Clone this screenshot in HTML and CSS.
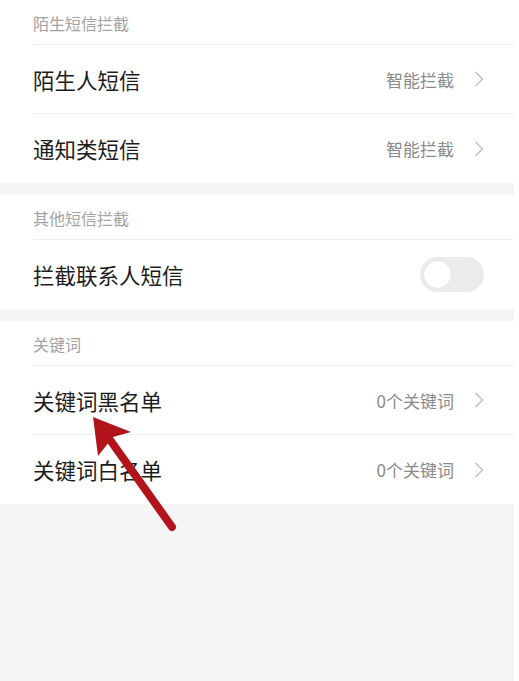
FILE: index.html
```html
<!DOCTYPE html>
<html lang="zh-CN">
<head>
<meta charset="utf-8">
<link rel="stylesheet" href="styles.css">
</head>
<body>
<div class="page">
  <section class="group">
    <div class="group-title">陌生短信拦截</div>
    <div class="row">
      <span class="label">陌生人短信</span>
      <span class="value">智能拦截</span>
      <svg class="chev" viewBox="0 0 10 16"><path d="M1.5 1 L8.5 8 L1.5 15" fill="none" stroke="#bdbdbd" stroke-width="1.3"/></svg>
    </div>
    <div class="row">
      <span class="label">通知类短信</span>
      <span class="value">智能拦截</span>
      <svg class="chev" viewBox="0 0 10 16"><path d="M1.5 1 L8.5 8 L1.5 15" fill="none" stroke="#bdbdbd" stroke-width="1.3"/></svg>
    </div>
  </section>
  <section class="group">
    <div class="group-title">其他短信拦截</div>
    <div class="row">
      <span class="label">拦截联系人短信</span>
      <span class="toggle"><span class="knob"></span></span>
    </div>
  </section>
  <section class="group">
    <div class="group-title">关键词</div>
    <div class="row">
      <span class="label">关键词黑名单</span>
      <span class="value">0个关键词</span>
      <svg class="chev" viewBox="0 0 10 16"><path d="M1.5 1 L8.5 8 L1.5 15" fill="none" stroke="#bdbdbd" stroke-width="1.3"/></svg>
    </div>
    <div class="row">
      <span class="label">关键词白名单</span>
      <span class="value">0个关键词</span>
      <svg class="chev" viewBox="0 0 10 16"><path d="M1.5 1 L8.5 8 L1.5 15" fill="none" stroke="#bdbdbd" stroke-width="1.3"/></svg>
    </div>
  </section>
  <div class="rest"></div>
  <svg class="pointer" viewBox="0 0 519 681" width="519" height="681">
    <line x1="172" y1="527" x2="108" y2="437" stroke="#b3141c" stroke-width="8" stroke-linecap="round"/>
    <polygon points="93,417 131,432 113,437 98,456" fill="#b3141c"/>
  </svg>
</div>
</body>
</html>
```

FILE: styles.css
```css
html, body {
  margin: 0;
  padding: 0;
  background: #ffffff;
}
body {
  font-family: "Noto Sans CJK SC", "Noto Sans", sans-serif;
  width: 519px;
  height: 681px;
  overflow: hidden;
}
.page {
  position: relative;
  width: 514px;
  height: 681px;
  background: #f5f5f5;
  display: flex;
  flex-direction: column;
  gap: 12px;
}
.group {
  background: #ffffff;
  padding-left: 33px;
}
.group-title {
  height: 45px;
  display: flex;
  align-items: center;
  font-size: 16px;
  color: #a3a3a3;
  border-bottom: 1px solid #efefef;
  padding-top: 1px;
  box-sizing: border-box;
}
.row {
  height: 69px;
  display: flex;
  align-items: center;
  border-bottom: 1px solid #efefef;
  padding-right: 30px;
  box-sizing: border-box;
}
.row:last-child {
  border-bottom: none;
}
.label {
  flex: 1;
  font-size: 21.5px;
  color: #1c1c1c;
}
.value {
  font-size: 17px;
  color: #8a8a8a;
  margin-right: 20px;
}
.chev {
  width: 10px;
  height: 16px;
}
.toggle {
  width: 64px;
  height: 35px;
  border-radius: 18px;
  background: #ebebeb;
  display: flex;
  align-items: center;
  padding-left: 4px;
  box-sizing: border-box;
}
.knob {
  width: 27px;
  height: 27px;
  border-radius: 50%;
  background: #ffffff;
  box-shadow: 0 0 1px rgba(0,0,0,0.15);
}
.rest {
  flex: 1;
}
.pointer {
  position: absolute;
  left: 0;
  top: 0;
}
```
